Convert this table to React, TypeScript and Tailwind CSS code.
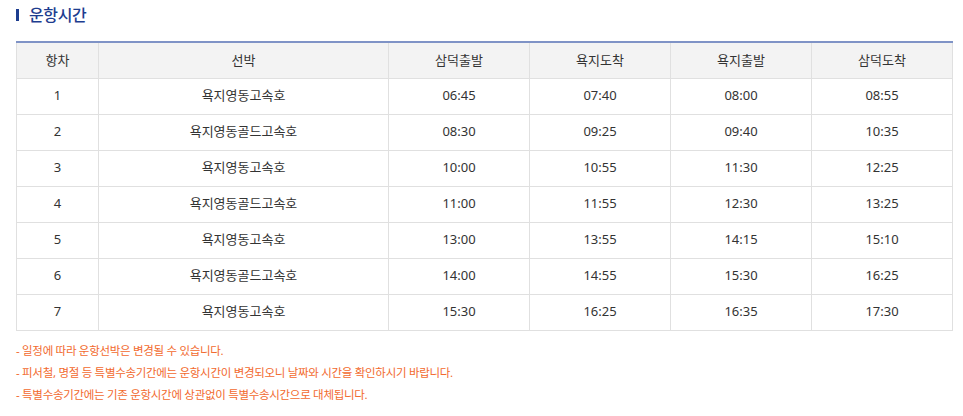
import React from "react";

type Trip = {
  no: number;
  ship: string;
  times: string[];
};

const trips: Trip[] = [
  { no: 1, ship: "욕지영동고속호", times: ["06:45", "07:40", "08:00", "08:55"] },
  { no: 2, ship: "욕지영동골드고속호", times: ["08:30", "09:25", "09:40", "10:35"] },
  { no: 3, ship: "욕지영동고속호", times: ["10:00", "10:55", "11:30", "12:25"] },
  { no: 4, ship: "욕지영동골드고속호", times: ["11:00", "11:55", "12:30", "13:25"] },
  { no: 5, ship: "욕지영동고속호", times: ["13:00", "13:55", "14:15", "15:10"] },
  { no: 6, ship: "욕지영동골드고속호", times: ["14:00", "14:55", "15:30", "16:25"] },
  { no: 7, ship: "욕지영동고속호", times: ["15:30", "16:25", "16:35", "17:30"] },
];

const headers = ["항차", "선박", "삼덕출발", "욕지도착", "욕지출발", "삼덕도착"];

const notes = [
  "- 일정에 따라 운항선박은 변경될 수 있습니다.",
  "- 피서철, 명절 등 특별수송기간에는 운항시간이 변경되오니 날짜와 시간을 확인하시기 바랍니다.",
  "- 특별수송기간에는 기존 운항시간에 상관없이 특별수송시간으로 대체됩니다.",
];

const cell = "h-[36px] border border-[#e0e0e0] text-center align-middle";

const App = () => {
  return (
    <div
      className="w-[963px] h-[416px] bg-white px-4 text-[#333]"
      style={{ fontFamily: "'Noto Sans', 'Noto Sans CJK KR', sans-serif" }}
    >
      {/* title */}
      <div className="flex h-[29px] items-center gap-[10px]">
        <span className="h-[12px] w-[3px] bg-[#1d3d8f]" />
        <h2 className="text-[16px] font-medium tracking-tight text-[#1d3d8f]">운항시간</h2>
      </div>

      <table className="mt-[12px] w-[936px] table-fixed border-collapse border-t-2 border-t-[#7f93c6] text-[13px]">
        <colgroup>
          <col className="w-[82px]" />
          <col className="w-[290px]" />
          <col className="w-[141px]" />
          <col className="w-[141px]" />
          <col className="w-[141px]" />
          <col className="w-[141px]" />
        </colgroup>
        <thead>
          <tr className="bg-[#f3f3f3]">
            {headers.map((h) => (
              <th key={h} className={`${cell} border-t-0 font-normal`}>
                {h}
              </th>
            ))}
          </tr>
        </thead>
        <tbody>
          {trips.map((t) => (
            <tr key={t.no}>
              <td className={cell}>{t.no}</td>
              <td className={cell}>{t.ship}</td>
              {t.times.map((time, i) => (
                <td key={i} className={cell}>
                  {time}
                </td>
              ))}
            </tr>
          ))}
        </tbody>
      </table>

      <ul className="mt-[9px] flex flex-col text-[11.5px] leading-[22px] tracking-[-0.3px] text-[#f26a2e]">
        {notes.map((n) => (
          <li key={n}>{n}</li>
        ))}
      </ul>
    </div>
  );
};

export default App;
